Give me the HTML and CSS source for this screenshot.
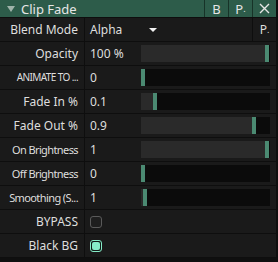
FILE: index.html
```html
<!DOCTYPE html>
<html lang="en">
<head>
  <meta charset="UTF-8">
  <meta name="viewport" content="width=device-width, initial-scale=1.0">
  <title>Clip Fade</title>
  <link rel="stylesheet" href="styles.css">
</head>
<body>

  <div class="panel">
    <header class="header">
      <span class="caret"></span>
      <span class="title">Clip Fade</span>
      <span class="hbtn">B</span>
      <span class="hbtn">P<i>.</i></span>
      <span class="hbtn">
        <svg width="11" height="11" viewBox="0 0 11 11"><path d="M1 1 L10 10 M10 1 L1 10" stroke="#e6e6e6" stroke-width="1.4"/></svg>
      </span>
    </header>

    <div class="row">
      <div class="label">Blend Mode</div>
      <div class="value">
        <span class="num">Alpha</span>
        <span class="drop"></span>
        <span class="pbtn">P<i>.</i></span>
      </div>
    </div>

    <div class="row">
      <div class="label">Opacity</div>
      <div class="value">
        <span class="num">100 %</span>
        <div class="track"><div class="fill" style="width: 124px"></div><div class="knob"></div></div>
      </div>
    </div>

    <div class="row">
      <div class="label small">ANIMATE TO ...</div>
      <div class="value">
        <span class="num">0</span>
        <div class="track"><div class="fill" style="width: 0px"></div><div class="knob"></div></div>
      </div>
    </div>

    <div class="row">
      <div class="label">Fade In %</div>
      <div class="value">
        <span class="num">0.1</span>
        <div class="track"><div class="fill" style="width: 12px"></div><div class="knob"></div></div>
      </div>
    </div>

    <div class="row">
      <div class="label">Fade Out %</div>
      <div class="value">
        <span class="num">0.9</span>
        <div class="track"><div class="fill" style="width: 111px"></div><div class="knob"></div></div>
      </div>
    </div>

    <div class="row">
      <div class="label tight">On Brightness</div>
      <div class="value">
        <span class="num">1</span>
        <div class="track"><div class="fill" style="width: 124px"></div><div class="knob"></div></div>
      </div>
    </div>

    <div class="row">
      <div class="label tight">Off Brightness</div>
      <div class="value">
        <span class="num">0</span>
        <div class="track"><div class="fill" style="width: 0px"></div><div class="knob"></div></div>
      </div>
    </div>

    <div class="row">
      <div class="label tight">Smoothing (S...</div>
      <div class="value">
        <span class="num">1</span>
        <div class="track"><div class="fill" style="width: 2px"></div><div class="knob"></div></div>
      </div>
    </div>

    <div class="row">
      <div class="label">BYPASS</div>
      <div class="value">
        <span class="check"></span>
      </div>
    </div>

    <div class="row">
      <div class="label">Black BG</div>
      <div class="value">
        <span class="check on"><span class="dot"></span></span>
      </div>
    </div>
  </div>

</body>
</html>
```

FILE: styles.css
```css
* {
  box-sizing: border-box;
  margin: 0;
  padding: 0;
}
body {
  font-family: "Noto Sans", "DejaVu Sans", sans-serif;
  font-size: 12px;
  background-color: #0f0f0f;
  color: #dedede;
  width: 278px;
  height: 262px;
  overflow: hidden;
}
.panel {
  border-right: 2px solid #0e0e0e;
}
.header {
  display: flex;
  align-items: stretch;
  height: 18px;
  background-color: #2d5c4a;
  border-bottom: 1px solid #0e0e0e;
  color: #e6e6e6;
  font-size: 13px;
  line-height: 18px;
}
.caret {
  width: 0;
  height: 0;
  margin: 6px 7px 0 7px;
  border-left: 4px solid transparent;
  border-right: 4px solid transparent;
  border-top: 6px solid #9fb3aa;
}
.title {
  flex: 1;
  margin-left: -1px;
}
.hbtn {
  display: flex;
  align-items: center;
  justify-content: center;
  width: 24px;
  border-left: 1px solid #173328;
}
.hbtn i, .pbtn i {
  font-style: normal;
  font-size: 9px;
}
.row {
  display: flex;
  height: 24px;
  background-color: #1a1a1a;
  border-bottom: 1px solid #0e0e0e;
}
.label {
  width: 85px;
  padding-right: 6px;
  border-right: 1px solid #0e0e0e;
  text-align: right;
  line-height: 23px;
  white-space: nowrap;
  overflow: hidden;
}
.label.small {
  font-size: 10px;
  letter-spacing: -0.6px;
}
.label.tight {
  font-size: 11px;
  letter-spacing: -0.6px;
}
.value {
  flex: 1;
  display: flex;
  align-items: center;
  padding-left: 5px;
  padding-right: 6px;
}
.num {
  width: 51px;
  flex: none;
}
.drop {
  width: 0;
  height: 0;
  border-left: 4px solid transparent;
  border-right: 4px solid transparent;
  border-top: 4px solid #f2f2f2;
  margin-left: 8px;
  flex: none;
}
.pbtn {
  margin-left: auto;
  margin-right: -6px;
  width: 24px;
  height: 100%;
  display: flex;
  align-items: center;
  justify-content: center;
  border-left: 1px solid #0e0e0e;
}
.track {
  flex: 1;
  height: 17px;
  display: flex;
  background-color: #0b0b0b;
}
.fill {
  background-color: #2a2a2a;
}
.knob {
  width: 4px;
  background-color: #4b8a72;
}
.check {
  width: 12px;
  height: 12px;
  border: 1px solid #5a5a5a;
  border-radius: 3px;
  background-color: #1e1e1e;
}
.check.on {
  border: 1px solid #86ecc8;
  padding: 1px;
  background-color: #0e1a16;
}
.dot {
  display: block;
  width: 8px;
  height: 8px;
  border-radius: 2px;
  background-color: #86ecc8;
}
```
